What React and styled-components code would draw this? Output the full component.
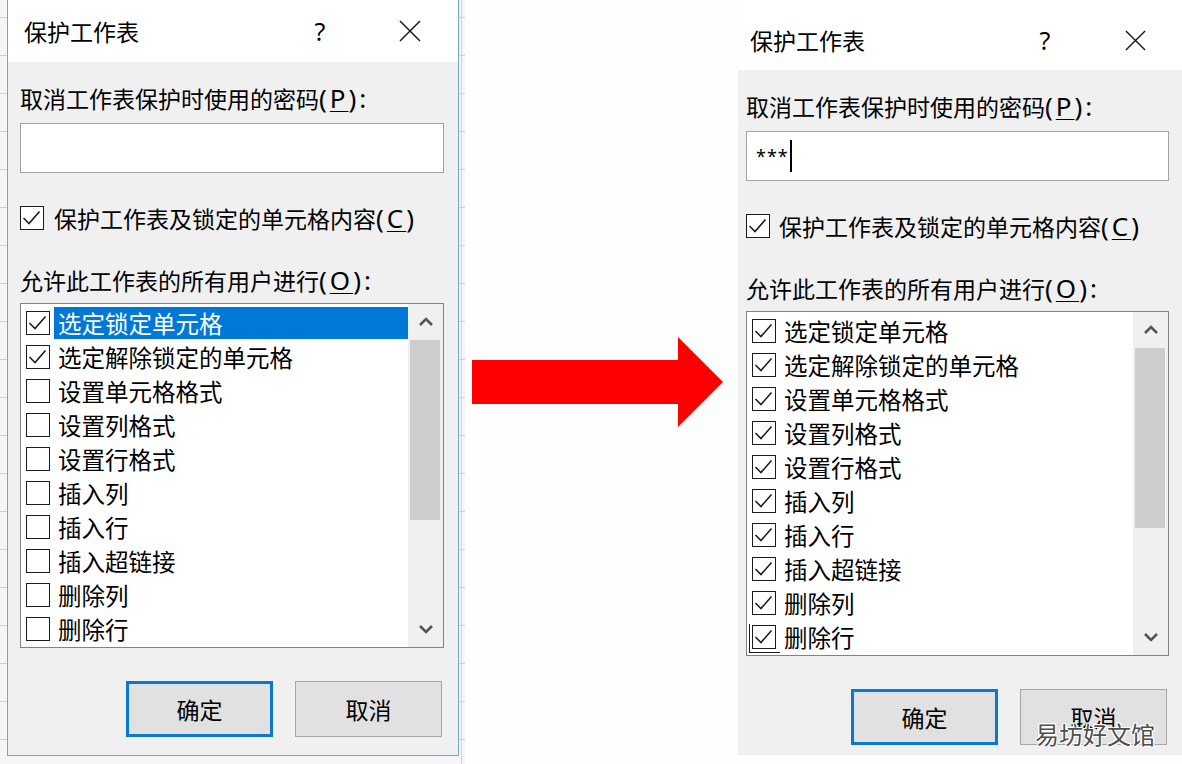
import React from 'react';
import styled, { createGlobalStyle } from 'styled-components';

const GlobalStyle = createGlobalStyle`
  body {
    margin: 0;
    background: #fefefe;
    color: #000;
    font-family: "Noto Sans CJK SC", "Noto Sans", sans-serif;
  }
`;

const Page = styled.div`
  display: flex;
  width: 1182px;
  height: 764px;
  overflow: hidden;
  background: #fefefe;
`;

/* spreadsheet grid peeking out behind the first dialog */
const Sheet = styled.div`
  flex: none;
  width: 465px;
  height: 764px;
  box-sizing: border-box;
  padding-left: 7px;
  background-color: #f6f6f9;
  background-image:
    linear-gradient(to right, transparent 461px, #d3d3dc 461px, #d3d3dc 462px, transparent 462px),
    repeating-linear-gradient(to bottom, transparent 0, transparent 17px, #cfcfd9 17px, #cfcfd9 18px, transparent 18px, transparent 38px);
`;

const Window = styled.div`
  position: relative;
  flex: none;
  display: flex;
  flex-direction: column;
  width: ${(p) => p.$width}px;
  align-self: flex-start;
  box-sizing: border-box;
  background: #f0f0f0;
  border: ${(p) => (p.$framed ? '1px solid #78a4dc' : 'none')};
  border-top: none;
`;

const TitleBar = styled.div`
  display: flex;
  align-items: center;
  height: ${(p) => p.$height}px;
  box-sizing: border-box;
  padding: ${(p) => p.$padTop}px ${(p) => p.$padRight}px 0 ${(p) => p.$padLeft}px;
  background: #fff;
`;

const Title = styled.span`
  flex: 1;
  font-size: 23px;
  line-height: 32px;
`;

const Help = styled.span`
  width: 14px;
  text-align: center;
  font-family: "Noto Sans", sans-serif;
  font-size: 25px;
  line-height: 32px;
`;

const Close = styled.span`
  display: flex;
  margin-left: ${(p) => p.$gap}px;
`;

const Body = styled.div`
  display: flex;
  flex-direction: column;
  padding: 20px ${(p) => p.$padRight}px ${(p) => p.$padBottom}px ${(p) => p.$padLeft}px;
`;

const FieldLabel = styled.div`
  margin-top: ${(p) => p.$top || 0}px;
  font-size: 23px;
  line-height: 32px;
  white-space: nowrap;
`;

/* latin access key, e.g. (P) */
const Key = styled.span`
  font-family: "Noto Sans", sans-serif;
  font-size: 26px;
  letter-spacing: 3px;

  u {
    text-underline-offset: 3px;
    text-decoration-thickness: 1px;
  }
`;

const PasswordBox = styled.div`
  display: flex;
  align-items: center;
  margin-top: 9px;
  height: 50px;
  box-sizing: border-box;
  padding-left: 9px;
  border: 1px solid #a3a3a3;
  background: #fff;
`;

const Stars = styled.span`
  font-family: "Noto Sans", sans-serif;
  font-size: 18px;
  letter-spacing: 1px;
`;

const Caret = styled.span`
  width: 2px;
  height: 32px;
  margin-left: 1px;
  background: #000;
`;

const CheckRow = styled.label`
  display: flex;
  align-items: center;
  gap: ${(p) => p.$gap}px;
  margin-top: 29px;
  height: 32px;
  font-size: 23px;
  white-space: nowrap;
`;

const Box = styled.span`
  position: relative;
  flex: none;
  display: flex;
  width: 24px;
  height: 24px;
  box-sizing: border-box;
  border: 1.5px solid #1c1c1c;
  background: #fff;

  ${(p) =>
    p.$ghost &&
    `
    &::after {
      content: '';
      position: absolute;
      left: -4px;
      bottom: -5px;
      width: 30px;
      height: 28px;
      border-left: 1.5px solid #1c1c1c;
      border-bottom: 1.5px solid #1c1c1c;
    }
  `}
`;

const ListBox = styled.div`
  display: flex;
  margin-top: 7px;
  height: 345px;
  box-sizing: border-box;
  border: 1px solid #828282;
  background: #fff;
`;

const Items = styled.div`
  flex: 1;
  padding-top: 2px;
  overflow: hidden;
`;

const ItemRow = styled.div`
  display: flex;
  align-items: center;
  height: 34px;
  padding-left: 5px;
`;

const ItemText = styled.span`
  flex: 1;
  margin-left: 4px;
  padding-left: 4px;
  height: 32px;
  font-size: 23.5px;
  line-height: 32px;
  white-space: nowrap;
  background: ${(p) => (p.$selected ? '#0078d7' : 'transparent')};
  color: ${(p) => (p.$selected ? '#fff' : '#000')};
`;

const ScrollTrack = styled.div`
  flex: none;
  display: flex;
  flex-direction: column;
  width: 35px;
  background: #f0f0f0;
`;

const ScrollArrow = styled.div`
  display: flex;
  align-items: center;
  justify-content: center;
  height: 36px;
  margin-top: ${(p) => (p.$bottom ? 'auto' : '0')};
`;

const Thumb = styled.div`
  height: 180px;
  margin: 0 3px 0 2px;
  background: #cdcdcd;
`;

const ButtonRow = styled.div`
  display: flex;
  justify-content: flex-end;
  gap: 22px;
  margin-top: 33px;
  padding-right: 2px;
`;

const Button = styled.div`
  display: flex;
  align-items: center;
  justify-content: center;
  width: 147px;
  height: 56px;
  box-sizing: border-box;
  background: #e1e1e1;
  border: ${(p) => (p.$primary ? '3px solid #0a77d5' : '1px solid #a6a6a6')};
  font-size: 23px;
`;

const ArrowLane = styled.div`
  flex: 1;
  display: flex;
  align-items: center;
  padding-left: 7px;
`;

const Watermark = styled.span`
  position: absolute;
  left: 297px;
  top: 719px;
  font-size: 24px;
  line-height: 30px;
  color: #4e4e4e;
  white-space: nowrap;
  text-shadow:
    1px 0 0 #fff, -1px 0 0 #fff, 0 1px 0 #fff, 0 -1px 0 #fff,
    1px 1px 0 #fff, -1px -1px 0 #fff, 1px -1px 0 #fff, -1px 1px 0 #fff;
`;

const Tick = () => (
  <svg width="21" height="21" viewBox="0 0 21 21">
    <polyline points="2.5,11 8,16.5 18.5,4.5" fill="none" stroke="#1c1c1c" strokeWidth="1.6" />
  </svg>
);

const Chevron = ({ down }) => (
  <svg width="16" height="10" viewBox="0 0 16 10">
    <polyline
      points={down ? '2,2 8,8 14,2' : '2,8 8,2 14,8'}
      fill="none"
      stroke="#555"
      strokeWidth="2.6"
    />
  </svg>
);

const CloseIcon = ({ size }) => (
  <svg width={size} height={size} viewBox="0 0 22 22">
    <path d="M1 1 L21 21 M21 1 L1 21" stroke="#1a1a1a" strokeWidth="1.5" />
  </svg>
);

const Check = ({ checked, ghost }) => <Box $ghost={ghost}>{checked && <Tick />}</Box>;

const permissions = [
  '选定锁定单元格',
  '选定解除锁定的单元格',
  '设置单元格格式',
  '设置列格式',
  '设置行格式',
  '插入列',
  '插入行',
  '插入超链接',
  '删除列',
  '删除行',
];

const ProtectSheetDialog = ({ layout, password, checkedCount, selected, ghostLast, children }) => (
  <Window $width={layout.width} $framed={layout.framed}>
    <TitleBar
      $height={layout.titleHeight}
      $padTop={layout.titlePadTop}
      $padLeft={layout.titlePadLeft}
      $padRight={layout.titlePadRight}
    >
      <Title>保护工作表</Title>
      <Help>?</Help>
      <Close $gap={layout.closeGap}>
        <CloseIcon size={layout.closeSize} />
      </Close>
    </TitleBar>
    <Body $padLeft={layout.padLeft} $padRight={layout.padRight} $padBottom={layout.padBottom}>
      <FieldLabel>
        取消工作表保护时使用的密码
        <Key>
          (<u>P</u>):
        </Key>
      </FieldLabel>
      <PasswordBox>
        {password && (
          <>
            <Stars>{password}</Stars>
            <Caret />
          </>
        )}
      </PasswordBox>
      <CheckRow $gap={layout.checkGap}>
        <Check checked />
        <span>
          保护工作表及锁定的单元格内容
          <Key>
            (<u>C</u>)
          </Key>
        </span>
      </CheckRow>
      <FieldLabel $top={30}>
        允许此工作表的所有用户进行
        <Key>
          (<u>O</u>):
        </Key>
      </FieldLabel>
      <ListBox>
        <Items>
          {permissions.map((name, i) => (
            <ItemRow key={name}>
              <Check checked={i < checkedCount} ghost={ghostLast && i === permissions.length - 1} />
              <ItemText $selected={selected === i}>{name}</ItemText>
            </ItemRow>
          ))}
        </Items>
        <ScrollTrack>
          <ScrollArrow>
            <Chevron />
          </ScrollArrow>
          <Thumb />
          <ScrollArrow $bottom>
            <Chevron down />
          </ScrollArrow>
        </ScrollTrack>
      </ListBox>
      <ButtonRow>
        <Button $primary>确定</Button>
        <Button>取消</Button>
      </ButtonRow>
    </Body>
    {children}
  </Window>
);

const beforeLayout = {
  width: 452,
  framed: true,
  titleHeight: 62,
  titlePadTop: 0,
  titlePadLeft: 16,
  titlePadRight: 37,
  closeGap: 72,
  closeSize: 22,
  padLeft: 12,
  padRight: 14,
  padBottom: 18,
  checkGap: 10,
};

const afterLayout = {
  width: 444,
  framed: false,
  titleHeight: 70,
  titlePadTop: 10,
  titlePadLeft: 12,
  titlePadRight: 36,
  closeGap: 73,
  closeSize: 21,
  padLeft: 8,
  padRight: 13,
  padBottom: 10,
  checkGap: 9,
};

const RedArrow = () => (
  <svg width="251" height="90" viewBox="0 0 251 90">
    <polygon points="0,23 206,23 206,0 251,45 206,90 206,67 0,67" fill="#ff0000" />
  </svg>
);

export default function App() {
  return (
    <>
      <GlobalStyle />
      <Page>
        <Sheet>
          <ProtectSheetDialog layout={beforeLayout} checkedCount={2} selected={0} />
        </Sheet>
        <ArrowLane>
          <RedArrow />
        </ArrowLane>
        <ProtectSheetDialog layout={afterLayout} password="***" checkedCount={10} ghostLast>
          <Watermark>易坊好文馆</Watermark>
        </ProtectSheetDialog>
      </Page>
    </>
  );
}
